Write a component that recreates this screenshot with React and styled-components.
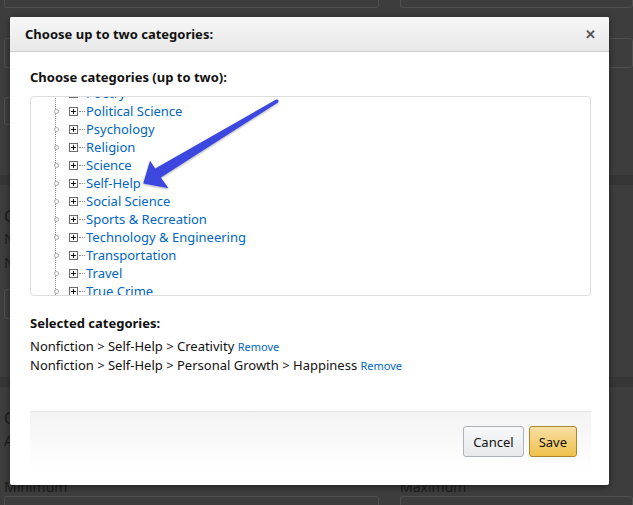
import React, { useEffect, useRef } from "react";
import styled, { createGlobalStyle } from "styled-components";

const GlobalStyle = createGlobalStyle`
  html, body {
    margin: 0;
    padding: 0;
    background: #3d3d3d;
  }
  body {
    font-family: "Noto Sans", "Liberation Sans", Arial, sans-serif;
  }
`;

const categories = [
  "Performing Arts",
  "Pets",
  "Philosophy",
  "Photography",
  "Poetry",
  "Political Science",
  "Psychology",
  "Religion",
  "Science",
  "Self-Help",
  "Social Science",
  "Sports & Recreation",
  "Technology & Engineering",
  "Transportation",
  "Travel",
  "True Crime",
  "Young Adult Nonfiction",
];

const selected = [
  "Nonfiction > Self-Help > Creativity",
  "Nonfiction > Self-Help > Personal Growth > Happiness",
];

const PlusBox = () => (
  <svg width="9" height="9" viewBox="0 0 9 9">
    <rect x="0.5" y="0.5" width="8" height="8" fill="#fff" stroke="#6b6b6b" />
    <path d="M2 4.5h5M4.5 2v5" stroke="#111" strokeWidth="1" />
  </svg>
);

export default function App() {
  const treeRef = useRef(null);

  useEffect(() => {
    // the tree is scrolled so Poetry sits half hidden at the top
    if (treeRef.current) treeRef.current.scrollTop = 4 * 18 + 13;
  }, []);

  return (
    <Page>
      <GlobalStyle />

      <BgSection>
        <BgRow $offset={-22}>
          <BgInput />
          <BgInput />
        </BgRow>
        <BgRow $offset={30}>
          <BgInput />
          <BgInput />
        </BgRow>
        <BgRow $offset={29}>
          <BgInput $h={28} />
        </BgRow>
      </BgSection>
      <BgBand />
      <BgSection $h={192}>
        <BgHeading $top={20}>Categories</BgHeading>
        <BgText>Nonfiction</BgText>
        <BgText>Nonfiction</BgText>
        <BgRow $offset={14}>
          <BgInput $h={30} />
        </BgRow>
      </BgSection>
      <BgBand />
      <BgSection $h={140}>
        <BgHeading $top={20}>Children's book</BgHeading>
        <BgText>Age range</BgText>
        <BgRow $offset={25}>
          <BgLabel>Minimum</BgLabel>
          <BgLabel>Maximum</BgLabel>
        </BgRow>
        <BgRow $offset={0}>
          <BgInput $h={30} />
          <BgInput $h={30} />
        </BgRow>
      </BgSection>

      <Modal>
        <ModalHeader>
          <ModalTitle>Choose up to two categories:</ModalTitle>
          <CloseButton>✕</CloseButton>
        </ModalHeader>

        <ModalBody>
          <SectionLabel>Choose categories (up to two):</SectionLabel>
          <TreeBox ref={treeRef}>
            <TreeList>
              {categories.map((c) => (
                <TreeRow key={c}>
                  <LeafDot />
                  <Toggle>
                    <PlusBox />
                  </Toggle>
                  <Connector />
                  <TreeLink>{c}</TreeLink>
                </TreeRow>
              ))}
            </TreeList>
          </TreeBox>

          <SelectedLabel>Selected categories:</SelectedLabel>
          {selected.map((s) => (
            <SelectedLine key={s}>
              {s} <RemoveLink>Remove</RemoveLink>
            </SelectedLine>
          ))}

          <Footer>
            <Button>Cancel</Button>
            <Button $primary>Save</Button>
          </Footer>
        </ModalBody>
      </Modal>

      <Arrow viewBox="138 95 145 100">
        <defs>
          <filter id="shadow" x="-20%" y="-20%" width="140%" height="140%">
            <feDropShadow dx="0" dy="1" stdDeviation="1.2" floodColor="#000" floodOpacity="0.35" />
          </filter>
        </defs>
        <g filter="url(#shadow)" fill="#3a47df">
          <polygon points="276.2,99.6 155.2,168.5 150,160.7 143.2,183.6 168.5,188.3 160.8,177.5 277.9,102.4" />
          <circle cx="277" cy="101" r="1.6" />
        </g>
      </Arrow>
    </Page>
  );
}

const Page = styled.div`
  position: relative;
  width: 633px;
  height: 505px;
  overflow: hidden;
  background: #3d3d3d;
`;

/* dimmed page behind the overlay */
const BgSection = styled.div`
  display: flow-root;
  height: ${(p) => p.$h || 175}px;
  padding: 0 0 0 4px;
  box-sizing: border-box;
`;

const BgBand = styled.div`
  height: 10px;
  background: #363636;
`;

const BgRow = styled.div`
  display: grid;
  grid-template-columns: 375px 1fr;
  gap: 21px;
  margin-top: ${(p) => p.$offset}px;
`;

const BgInput = styled.div`
  height: ${(p) => p.$h || 30}px;
  border: 1px solid #4f4f4f;
  border-radius: 3px;
  box-sizing: border-box;
`;

const BgHeading = styled.div`
  margin-top: ${(p) => p.$top}px;
  font-size: 16px;
  line-height: 22px;
  color: #1c1c1c;
`;

const BgText = styled.div`
  font-size: 14px;
  line-height: 24px;
  color: #1c1c1c;
`;

const BgLabel = styled.div`
  font-size: 14px;
  line-height: 18px;
  color: #1c1c1c;
`;

/* modal */
const Modal = styled.div`
  position: absolute;
  left: 10px;
  top: 17px;
  width: 599px;
  height: 468px;
  background: #fff;
  border-radius: 2px;
  box-shadow: 0 2px 6px rgba(0, 0, 0, 0.45);
  display: flex;
  flex-direction: column;
`;

const ModalHeader = styled.div`
  height: 35px;
  box-sizing: border-box;
  display: flex;
  align-items: center;
  justify-content: space-between;
  padding: 0 13px 0 15px;
  background: linear-gradient(#f7f7f7, #e8e8e8);
  border-bottom: 1px solid #cfcfcf;
  border-radius: 2px 2px 0 0;
`;

const ModalTitle = styled.h4`
  margin: 0;
  font-size: 13px;
  font-weight: 700;
  color: #111;
`;

const CloseButton = styled.span`
  font-size: 13px;
  font-weight: 700;
  color: #555;
  cursor: pointer;
`;

const ModalBody = styled.div`
  padding: 16px 18px 0 20px;
`;

const SectionLabel = styled.div`
  font-size: 13px;
  font-weight: 700;
  line-height: 18px;
  color: #111;
  margin-bottom: 10px;
`;

const TreeBox = styled.div`
  height: 200px;
  box-sizing: border-box;
  border: 1px solid #dcdcdc;
  border-radius: 4px;
  overflow: hidden;
`;

const TreeList = styled.ul`
  list-style: none;
  margin: 0;
  padding: 0;
`;

const TreeRow = styled.li`
  height: 18px;
  display: flex;
  align-items: center;
  padding-left: 23px;
  background: linear-gradient(to bottom, #8a8a8a 50%, transparent 50%) 24px 0 / 1px 2px repeat-y;
`;

const LeafDot = styled.span`
  width: 5px;
  height: 5px;
  border: 1px solid #a8a8a8;
  border-radius: 50%;
  background: #fff;
  box-sizing: border-box;
`;

const Toggle = styled.span`
  display: flex;
  margin-left: 10px;
`;

const Connector = styled.span`
  width: 6px;
  margin-left: 1px;
  border-top: 1px dotted #8a8a8a;
`;

const TreeLink = styled.a`
  margin-left: 1px;
  font-size: 13px;
  color: #0066c0;
  cursor: pointer;
  white-space: nowrap;
`;

const SelectedLabel = styled.div`
  margin-top: 18px;
  margin-bottom: 5px;
  font-size: 13px;
  font-weight: 700;
  line-height: 18px;
  color: #111;
`;

const SelectedLine = styled.div`
  font-size: 13px;
  line-height: 18px;
  color: #111;
`;

const RemoveLink = styled.a`
  font-size: 11px;
  color: #0066c0;
  cursor: pointer;
`;

const Footer = styled.div`
  margin-top: 36px;
  height: 60px;
  box-sizing: border-box;
  display: flex;
  justify-content: flex-end;
  align-items: flex-start;
  gap: 5px;
  padding: 14px 14px 0 0;
  border-top: 1px solid #e3e3e3;
  background: linear-gradient(#f3f3f3, #fff);
`;

const Button = styled.button`
  height: 31px;
  padding: 0 9px;
  font-family: inherit;
  font-size: 13px;
  color: #111;
  border-radius: 3px;
  border: 1px solid ${(p) => (p.$primary ? "#a88734" : "#adb1b8")};
  background: ${(p) =>
    p.$primary
      ? "linear-gradient(#f7dfa5, #f0c14b)"
      : "linear-gradient(#f7f8fa, #e7e9ec)"};
  cursor: pointer;
`;

const Arrow = styled.svg`
  position: absolute;
  left: 138px;
  top: 95px;
  width: 145px;
  height: 100px;
  pointer-events: none;
`;
